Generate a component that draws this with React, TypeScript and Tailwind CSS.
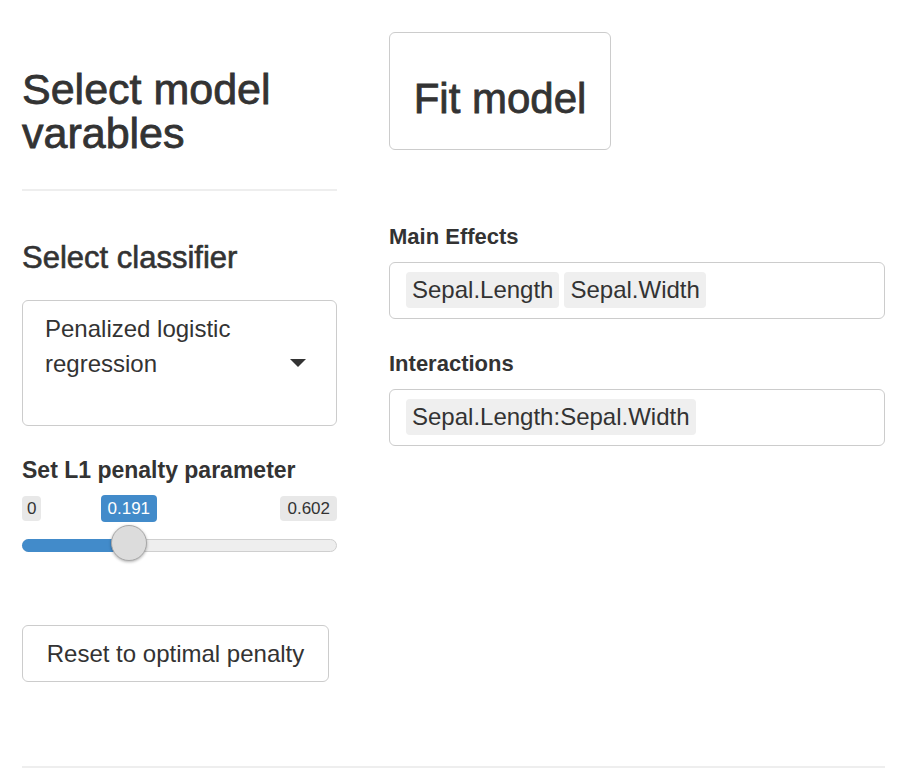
import { useState } from "react";

const MIN = 0;
const MAX = 0.602;
const TRACK_W = 315;
const HANDLE = 36;

const PenaltySlider = ({ value }: { value: number }) => {
	const pct = (value - MIN) / (MAX - MIN);
	const handleLeft = pct * (TRACK_W - HANDLE);
	const center = handleLeft + HANDLE / 2;

	return (
		<div className="relative mt-[13px] h-[68px] w-[315px]">
			<span className="absolute left-0 top-0 h-[25px] rounded-[4px] bg-[#e8e8e8] px-[5px] text-[17px] leading-[25px] text-[#333]">
				{MIN}
			</span>
			<span
				className="absolute top-[-1px] h-[27px] rounded-[4px] bg-[#428bca] px-[7px] text-[17px] leading-[27px] text-white"
				style={{ left: center - 28 }}
			>
				{value}
			</span>
			<span className="absolute right-0 top-0 h-[25px] rounded-[4px] bg-[#e8e8e8] px-[7px] text-[17px] leading-[25px] text-[#333]">
				{MAX}
			</span>
			<div className="absolute left-0 top-[43px] h-[13px] w-full rounded-full border border-[#cfcfcf] bg-[#eeeeee]" />
			<div className="absolute left-0 top-[43px] h-[13px] rounded-l-full bg-[#428bca]" style={{ width: center }} />
			<div
				className="absolute top-[29px] h-[36px] w-[36px] rounded-full border border-[#a8a8a8] bg-[#dcdcdc] shadow-[0_1px_3px_rgba(0,0,0,0.3)]"
				style={{ left: handleLeft }}
			/>
		</div>
	);
};

const Chip = ({ label }: { label: string }) => (
	<span className="h-[36px] rounded-[4px] bg-[#efefef] px-[6px] text-[24px] leading-[36px] text-[#333]">{label}</span>
);

const ChipBox = ({ items }: { items: string[] }) => (
	<div className="mt-[13px] flex h-[57px] gap-[5px] rounded-[6px] border border-[#cccccc] pb-[10px] pl-[16px] pt-[9px]">
		{items.map((item) => (
			<Chip key={item} label={item} />
		))}
	</div>
);

export default function App() {
	const [penalty] = useState(0.191);

	return (
		<div className="min-h-[768px] bg-white pl-[22px] pr-[24px] font-['Liberation_Sans',Arial,sans-serif] text-[#333]">
			<div className="flex gap-[52px]">
				<div className="flex w-[315px] flex-col">
					<h2 className="mt-[67px] text-[43px] leading-[44px] font-normal [-webkit-text-stroke:0.8px_#333]">
						Select model varables
					</h2>
					<hr className="mt-[34px] border-t-2 border-[#eeeeee]" />
					<h3 className="mt-[50px] text-[31px] leading-[34px] font-normal [-webkit-text-stroke:0.6px_#333]">
						Select classifier
					</h3>
					<div className="mt-[25px] flex h-[126px] items-start justify-between rounded-[6px] border border-[#cccccc] pl-[22px] pr-[30px] pt-[10px]">
						<span className="w-[220px] text-[24px] leading-[35px]">Penalized logistic regression</span>
						<svg width="16" height="8" viewBox="0 0 16 8" className="mt-[48px]">
							<path d="M0 0 L16 0 L8 8 Z" fill="#333" />
						</svg>
					</div>
					<label className="mt-[31px] text-[23px] leading-[26px] font-bold">Set L1 penalty parameter</label>
					<PenaltySlider value={penalty} />
					<button className="mt-[61px] h-[57px] w-[307px] rounded-[6px] border border-[#cccccc] bg-white text-[24px] text-[#333]">
						Reset to optimal penalty
					</button>
				</div>

				<div className="flex flex-1 flex-col">
					<button className="mt-[32px] h-[118px] w-[222px] rounded-[6px] border border-[#cccccc] bg-white pt-[16px] text-[42px] leading-[42px] text-[#333] [-webkit-text-stroke:0.8px_#333]">
						Fit model
					</button>
					<label className="mt-[74px] text-[22px] leading-[25px] font-bold">Main Effects</label>
					<ChipBox items={["Sepal.Length", "Sepal.Width"]} />
					<label className="mt-[32px] text-[22px] leading-[25px] font-bold">Interactions</label>
					<ChipBox items={["Sepal.Length:Sepal.Width"]} />
				</div>
			</div>
			<hr className="mt-[84px] border-t-2 border-[#eeeeee]" />
		</div>
	);
}
